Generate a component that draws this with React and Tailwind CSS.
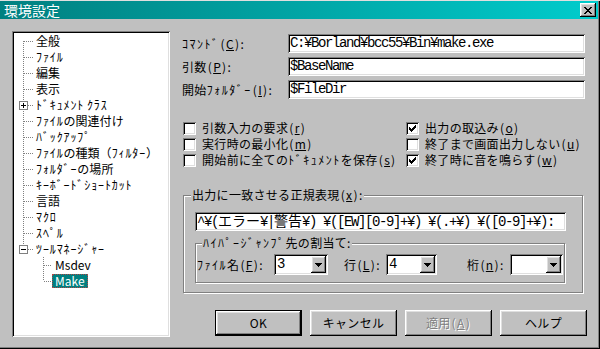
import React from "react";

const UI = "[font-family:'Noto_Sans_CJK_JP',sans-serif]";
const MONO = "[font-family:'Liberation_Mono','Noto_Sans_CJK_JP',monospace] text-[14px] tracking-[-1.4px]";
const SUNKEN =
  "shadow-[inset_1px_1px_0_#808080,inset_-1px_-1px_0_#fff,inset_2px_2px_0_#000,inset_-2px_-2px_0_#dfdfdf]";
const RAISED =
  "shadow-[inset_-1px_-1px_0_#000,inset_1px_1px_0_#fff,inset_-2px_-2px_0_#808080,inset_2px_2px_0_#dfdfdf]";
const ETCHED = "border border-[#808080] shadow-[inset_1px_1px_0_#fff,1px_1px_0_#fff]";

const CHECK = [
  [6, 0], [5, 1], [6, 1], [0, 2], [4, 2], [5, 2], [6, 2],
  [0, 3], [1, 3], [3, 3], [4, 3], [5, 3],
  [0, 4], [1, 4], [2, 4], [3, 4], [4, 4],
  [1, 5], [2, 5], [3, 5], [2, 6],
];

const XGLYPH = [
  [0, 0], [1, 0], [6, 0], [7, 0],
  [1, 1], [2, 1], [5, 1], [6, 1],
  [2, 2], [3, 2], [4, 2], [5, 2],
  [3, 3], [4, 3],
  [2, 4], [3, 4], [4, 4], [5, 4],
  [1, 5], [2, 5], [5, 5], [6, 5],
  [0, 6], [1, 6], [6, 6], [7, 6],
];

const ARROW = [
  [0, 0], [1, 0], [2, 0], [3, 0], [4, 0], [5, 0], [6, 0],
  [1, 1], [2, 1], [3, 1], [4, 1], [5, 1],
  [2, 2], [3, 2], [4, 2],
  [3, 3],
];

function Pixels({ pts, w, h, color = "#000" }) {
  return (
    <svg width={w} height={h} shapeRendering="crispEdges" className="block">
      {pts.map(([x, y], i) => (
        <rect key={i} x={x} y={y} width="1" height="1" fill={color} />
      ))}
    </svg>
  );
}

// Half-width katakana get a fixed cell, like the bitmap UI font
function J({ t, tree }) {
  const cell = tree ? "inline-block w-[6.9px] tracking-normal" : "inline-block w-[7.5px] tracking-normal";
  return Array.from(t).map((c, i) =>
    /[\uFF61-\uFF9F]/.test(c) ? (
      <span key={i} className={cell}>
        {c}
      </span>
    ) : (
      <React.Fragment key={i}>{c}</React.Fragment>
    )
  );
}

// "(x)" with the wide parentheses of the bitmap font
function Key({ k, colon }) {
  return (
    <>
      <span className="inline-block w-[6.5px] text-center">(</span>
      <u>{k}</u>
      <span className="inline-block w-[6.5px] text-center">)</span>
      {colon ? ":" : ""}
    </>
  );
}

const DOT = { stroke: "#808080", strokeDasharray: "1 1", shapeRendering: "crispEdges" };

function TreeRow({ label, kind = "mid", box, child, childLast, selected }) {
  return (
    <div className="flex h-[16px] items-start">
      <svg width={child ? 38 : 19} height="16" className="block shrink-0" shapeRendering="crispEdges">
        {!child && (
          <>
            <line x1="9.5" y1={kind === "first" ? 8 : 0} x2="9.5" y2={kind === "last" ? 8 : 16} {...DOT} />
            <line x1={box ? 14 : 10} y1="8.5" x2="19" y2="8.5" {...DOT} />
            {box && (
              <>
                <rect x="5.5" y="4.5" width="8" height="8" fill="#fff" stroke="#808080" />
                <line x1="7" y1="8.5" x2="12" y2="8.5" stroke="#000" />
                {box === "plus" && <line x1="9.5" y1="6" x2="9.5" y2="11" stroke="#000" />}
              </>
            )}
          </>
        )}
        {child && (
          <>
            <line x1="29.5" y1="0" x2="29.5" y2={childLast ? 8 : 16} {...DOT} />
            <line x1="30" y1="8.5" x2="38" y2="8.5" {...DOT} />
          </>
        )}
      </svg>
      {selected ? (
        <span className="mt-px h-[14px] px-[2px] flex items-center leading-none bg-[#008080] text-white border border-dotted border-[#b04848] whitespace-pre">
          {label}
        </span>
      ) : (
        <span className="px-[3px] leading-[16px] whitespace-pre">
          <J t={label} tree />
        </span>
      )}
    </div>
  );
}

function Field({ value }) {
  return (
    <div className={`h-[19px] w-[297px] bg-white ${SUNKEN} pl-[2px] flex items-center ${MONO} whitespace-pre`}>
      <span className="leading-[15px]">{value}</span>
    </div>
  );
}

function Checkbox({ checked }) {
  return (
    <div className={`w-[13px] h-[13px] shrink-0 bg-white ${SUNKEN} p-[3px]`}>
      {checked && <Pixels pts={CHECK} w={7} h={7} />}
    </div>
  );
}

function CheckRow({ checked, text, k }) {
  return (
    <div className="flex h-[16px] items-center gap-[6px]">
      <Checkbox checked={checked} />
      <span className="leading-[16px] whitespace-pre">
        <J t={text} />
        <Key k={k} />
      </span>
    </div>
  );
}

function Combo({ w, value }) {
  return (
    <div className={`h-[21px] ${w} bg-white ${SUNKEN} flex items-center shrink-0`}>
      <span className={`flex-1 pl-[3px] leading-[15px] ${MONO}`}>{value}</span>
      <div className={`w-[15px] h-[17px] mr-[2px] bg-[#c0c0c0] ${RAISED} flex items-center justify-center`}>
        <Pixels pts={ARROW} w={7} h={4} />
      </div>
    </div>
  );
}

function Button({ children, isDefault, disabled }) {
  const inner = (
    <div
      className={`w-full h-full bg-[#c0c0c0] ${RAISED} flex items-center justify-center ${
        disabled ? "text-[#808080] [text-shadow:1px_1px_0_#fff]" : ""
      }`}
    >
      {children}
    </div>
  );
  return isDefault ? (
    <div className="w-[87px] h-[26px] border border-black">{inner}</div>
  ) : (
    <div className="w-[87px] h-[26px]">{inner}</div>
  );
}

function Label({ w, text, k }) {
  return (
    <span className={`${w} shrink-0 whitespace-pre`}>
      <J t={text} />
      <Key k={k} colon />
    </span>
  );
}

export default function App() {
  return (
    <div
      className={`w-[600px] h-[349px] bg-[#c0c0c0] flex flex-col overflow-hidden text-[12px] tracking-[0.3px] text-black ${UI} shadow-[inset_0_1px_0_#dfdfdf,inset_-1px_-1px_0_#000,inset_-2px_-2px_0_#808080]`}
    >
      {/* Title bar */}
      <div className="mt-px mr-[2px] h-[18px] bg-linear-to-r from-[#008080] to-[#00cccc] flex items-center shrink-0">
        <span className="ml-[4px] text-white text-[14px] tracking-normal leading-[18px] flex-1">環境設定</span>
        <div className={`w-[16px] h-[14px] mr-[2px] bg-[#c0c0c0] ${RAISED} flex items-center justify-center`}>
          <Pixels pts={XGLYPH} w={8} h={7} />
        </div>
      </div>

      {/* Body */}
      <div className="flex flex-1 pl-[12px]">
        {/* Tree */}
        <div className={`mt-[12px] w-[158px] h-[306px] bg-white ${SUNKEN} p-[2px] shrink-0 tracking-normal`}>
          <TreeRow label="全般" kind="first" />
          <TreeRow label="ﾌｧｲﾙ" />
          <TreeRow label="編集" />
          <TreeRow label="表示" />
          <TreeRow label="ﾄﾞｷｭﾒﾝﾄ ｸﾗｽ" box="plus" />
          <TreeRow label="ﾌｧｲﾙの関連付け" />
          <TreeRow label="ﾊﾞｯｸｱｯﾌﾟ" />
          <TreeRow label="ﾌｧｲﾙの種類（ﾌｨﾙﾀｰ）" />
          <TreeRow label="ﾌｫﾙﾀﾞｰの場所" />
          <TreeRow label="ｷｰﾎﾞｰﾄﾞｼｮｰﾄｶｯﾄ" />
          <TreeRow label="言語" />
          <TreeRow label="ﾏｸﾛ" />
          <TreeRow label="ｽﾍﾟﾙ" />
          <TreeRow label="ﾂｰﾙﾏﾈｰｼﾞｬｰ" kind="last" box="minus" />
          <TreeRow label="Msdev" child />
          <TreeRow label="Make" child childLast selected />
        </div>

        {/* Right panel */}
        <div className="ml-[12px] w-[405px] flex flex-col">
          <div className="mt-[15px] flex flex-col gap-[4px]">
            <div className="flex items-center">
              <Label w="w-[106px]" text="ｺﾏﾝﾄﾞ" k="C" />
              <Field value="C:¥Borland¥bcc55¥Bin¥make.exe" />
            </div>
            <div className="flex items-center">
              <Label w="w-[106px]" text="引数" k="P" />
              <Field value="$BaseName" />
            </div>
            <div className="flex items-center">
              <Label w="w-[106px]" text="開始ﾌｫﾙﾀﾞｰ" k="I" />
              <Field value="$FileDir" />
            </div>
          </div>

          <div className="mt-[21px] ml-[1px] grid grid-cols-[223px_1fr]">
            <div className="flex flex-col">
              <CheckRow text="引数入力の要求" k="r" />
              <CheckRow text="実行時の最小化" k="m" />
              <CheckRow text="開始前に全てのﾄﾞｷｭﾒﾝﾄを保存" k="s" />
            </div>
            <div className="flex flex-col">
              <CheckRow checked text="出力の取込み" k="o" />
              <CheckRow text="終了まで画面出力しない" k="u" />
              <CheckRow checked text="終了時に音を鳴らす" k="w" />
            </div>
          </div>

          {/* Regex group */}
          <div className={`relative mt-[27px] ml-[1px] w-[400px] h-[98px] ${ETCHED}`}>
            <span className="absolute -top-[8px] left-[7px] px-[1px] bg-[#c0c0c0] leading-[14px] whitespace-pre">
              出力に一致させる正規表現
              <Key k="x" colon />
            </span>
            <div
              className={`mt-[16px] ml-[11px] h-[19px] w-[371px] bg-white ${SUNKEN} pl-[2px] flex items-center`}
            >
              <span className={`${MONO} leading-[15px] whitespace-pre`}>
                {"^¥("}
                <span className="inline-block w-[42px] tracking-normal leading-[15px] [font-family:'Noto_Sans_CJK_JP',sans-serif]">
                  エラー
                </span>
                {"¥|"}
                <span className="inline-block w-[28px] tracking-normal leading-[15px] [font-family:'Noto_Sans_CJK_JP',sans-serif]">
                  警告
                </span>
                {"¥) ¥([EW][0-9]+¥) ¥(.+¥) ¥([0-9]+¥):"}
              </span>
            </div>

            <div className={`relative mt-[12px] ml-[11px] w-[370px] h-[40px] ${ETCHED}`}>
              <span className="absolute -top-[8px] left-[6px] px-[1px] bg-[#c0c0c0] leading-[14px] whitespace-pre">
                <J t="ﾊｲﾊﾟｰｼﾞｬﾝﾌﾟ先の割当て:" />
              </span>
              <div className="mt-[10px] ml-[1px] flex items-center">
                <Label w="w-[77px]" text="ﾌｧｲﾙ名" k="F" />
                <Combo w="w-[54px]" value="3" />
                <Label w="ml-[16px] w-[42px]" text="行" k="L" />
                <Combo w="w-[51px]" value="4" />
                <Label w="ml-[30px] w-[43px]" text="桁" k="n" />
                <Combo w="w-[53px]" value="" />
              </div>
            </div>
          </div>

          {/* Buttons */}
          <div className="mt-[17px] ml-[33px] flex gap-[8px]">
            <Button isDefault>OK</Button>
            <Button>キャンセル</Button>
            <Button disabled>
              適用
              <Key k="A" />
            </Button>
            <Button>ヘルプ</Button>
          </div>
        </div>
      </div>
    </div>
  );
}
